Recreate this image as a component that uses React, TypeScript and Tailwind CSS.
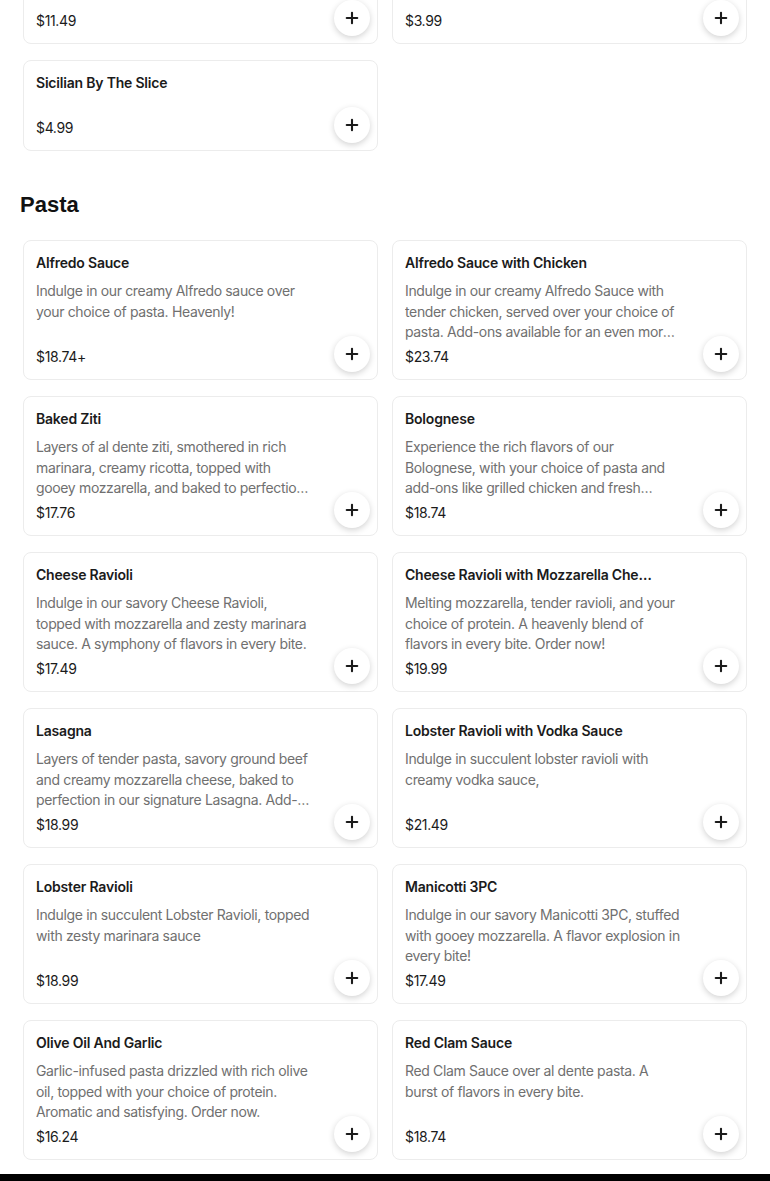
import { Plus } from 'lucide-react'

interface Item {
  name: string
  desc?: string
  price: string
}

const topItems: Item[] = [
  { name: 'Cheese By The Slice', price: '$11.49' },
  { name: 'Garlic Knots', price: '$3.99' },
  { name: 'Sicilian By The Slice', price: '$4.99' },
]

const pasta: Item[] = [
  {
    name: 'Alfredo Sauce',
    desc: 'Indulge in our creamy Alfredo sauce over your choice of pasta. Heavenly!',
    price: '$18.74+',
  },
  {
    name: 'Alfredo Sauce with Chicken',
    desc: 'Indulge in our creamy Alfredo Sauce with tender chicken, served over your choice of pasta. Add-ons available for an even more delicious experience.',
    price: '$23.74',
  },
  {
    name: 'Baked Ziti',
    desc: 'Layers of al dente ziti, smothered in rich marinara, creamy ricotta, topped with gooey mozzarella, and baked to perfection. Order now!',
    price: '$17.76',
  },
  {
    name: 'Bolognese',
    desc: 'Experience the rich flavors of our Bolognese, with your choice of pasta and add-ons like grilled chicken and fresh vegetables.',
    price: '$18.74',
  },
  {
    name: 'Cheese Ravioli',
    desc: 'Indulge in our savory Cheese Ravioli, topped with mozzarella and zesty marinara sauce. A symphony of flavors in every bite.',
    price: '$17.49',
  },
  {
    name: 'Cheese Ravioli with Mozzarella Cheese',
    desc: 'Melting mozzarella, tender ravioli, and your choice of protein. A heavenly blend of flavors in every bite. Order now!',
    price: '$19.99',
  },
  {
    name: 'Lasagna',
    desc: 'Layers of tender pasta, savory ground beef and creamy mozzarella cheese, baked to perfection in our signature Lasagna. Add-ons available.',
    price: '$18.99',
  },
  {
    name: 'Lobster Ravioli with Vodka Sauce',
    desc: 'Indulge in succulent lobster ravioli with creamy vodka sauce,',
    price: '$21.49',
  },
  {
    name: 'Lobster Ravioli',
    desc: 'Indulge in succulent Lobster Ravioli, topped with zesty marinara sauce',
    price: '$18.99',
  },
  {
    name: 'Manicotti 3PC',
    desc: 'Indulge in our savory Manicotti 3PC, stuffed with gooey mozzarella. A flavor explosion in every bite!',
    price: '$17.49',
  },
  {
    name: 'Olive Oil And Garlic',
    desc: 'Garlic-infused pasta drizzled with rich olive oil, topped with your choice of protein. Aromatic and satisfying. Order now.',
    price: '$16.24',
  },
  {
    name: 'Red Clam Sauce',
    desc: 'Red Clam Sauce over al dente pasta. A burst of flavors in every bite.',
    price: '$18.74',
  },
]

function Card({ item }: { item: Item }) {
  return (
    <div
      className={`relative flex flex-col rounded-lg border border-[#ececec] bg-white px-3 pt-3 pb-3 ${
        item.desc ? 'h-[140px]' : 'h-[91px]'
      }`}
    >
      <p className="max-w-[250px] truncate text-[14px] leading-5 font-semibold tracking-[-0.2px] text-[#1b1b1b]">
        {item.name}
      </p>
      {item.desc && (
        <p className="mt-2 line-clamp-3 max-w-[276px] text-[14px] leading-[20.5px] tracking-[-0.35px] text-[#707070]">
          {item.desc}
        </p>
      )}
      <p className="mt-auto text-[14px] leading-5 tracking-[-0.35px] text-[#1b1b1b]">{item.price}</p>
      <button className="absolute right-[7px] bottom-[7px] flex h-9 w-9 items-center justify-center rounded-full bg-white shadow-[0_2px_6px_rgba(0,0,0,0.18)]">
        <Plus size={18} strokeWidth={2.8} className="text-[#1b1b1b]" />
      </button>
    </div>
  )
}

export default function App() {
  return (
    <div className="h-[1181px] overflow-hidden bg-white font-['Inter',sans-serif]">
      <div className="-mt-[47px] px-[23px]">
        <div className="grid grid-cols-2 gap-x-[14px] gap-y-4">
          {topItems.map((it) => (
            <Card key={it.name} item={it} />
          ))}
        </div>
      </div>
      <h2 className="mt-[40px] px-5 font-['Liberation_Sans',sans-serif] text-[22px] leading-7 font-bold text-[#111]">
        Pasta
      </h2>
      <div className="mt-[21px] grid grid-cols-2 gap-x-[14px] gap-y-4 px-[23px]">
        {pasta.map((it) => (
          <Card key={it.name} item={it} />
        ))}
      </div>
      <div className="mt-[14px] h-[40px] bg-black" />
    </div>
  )
}
